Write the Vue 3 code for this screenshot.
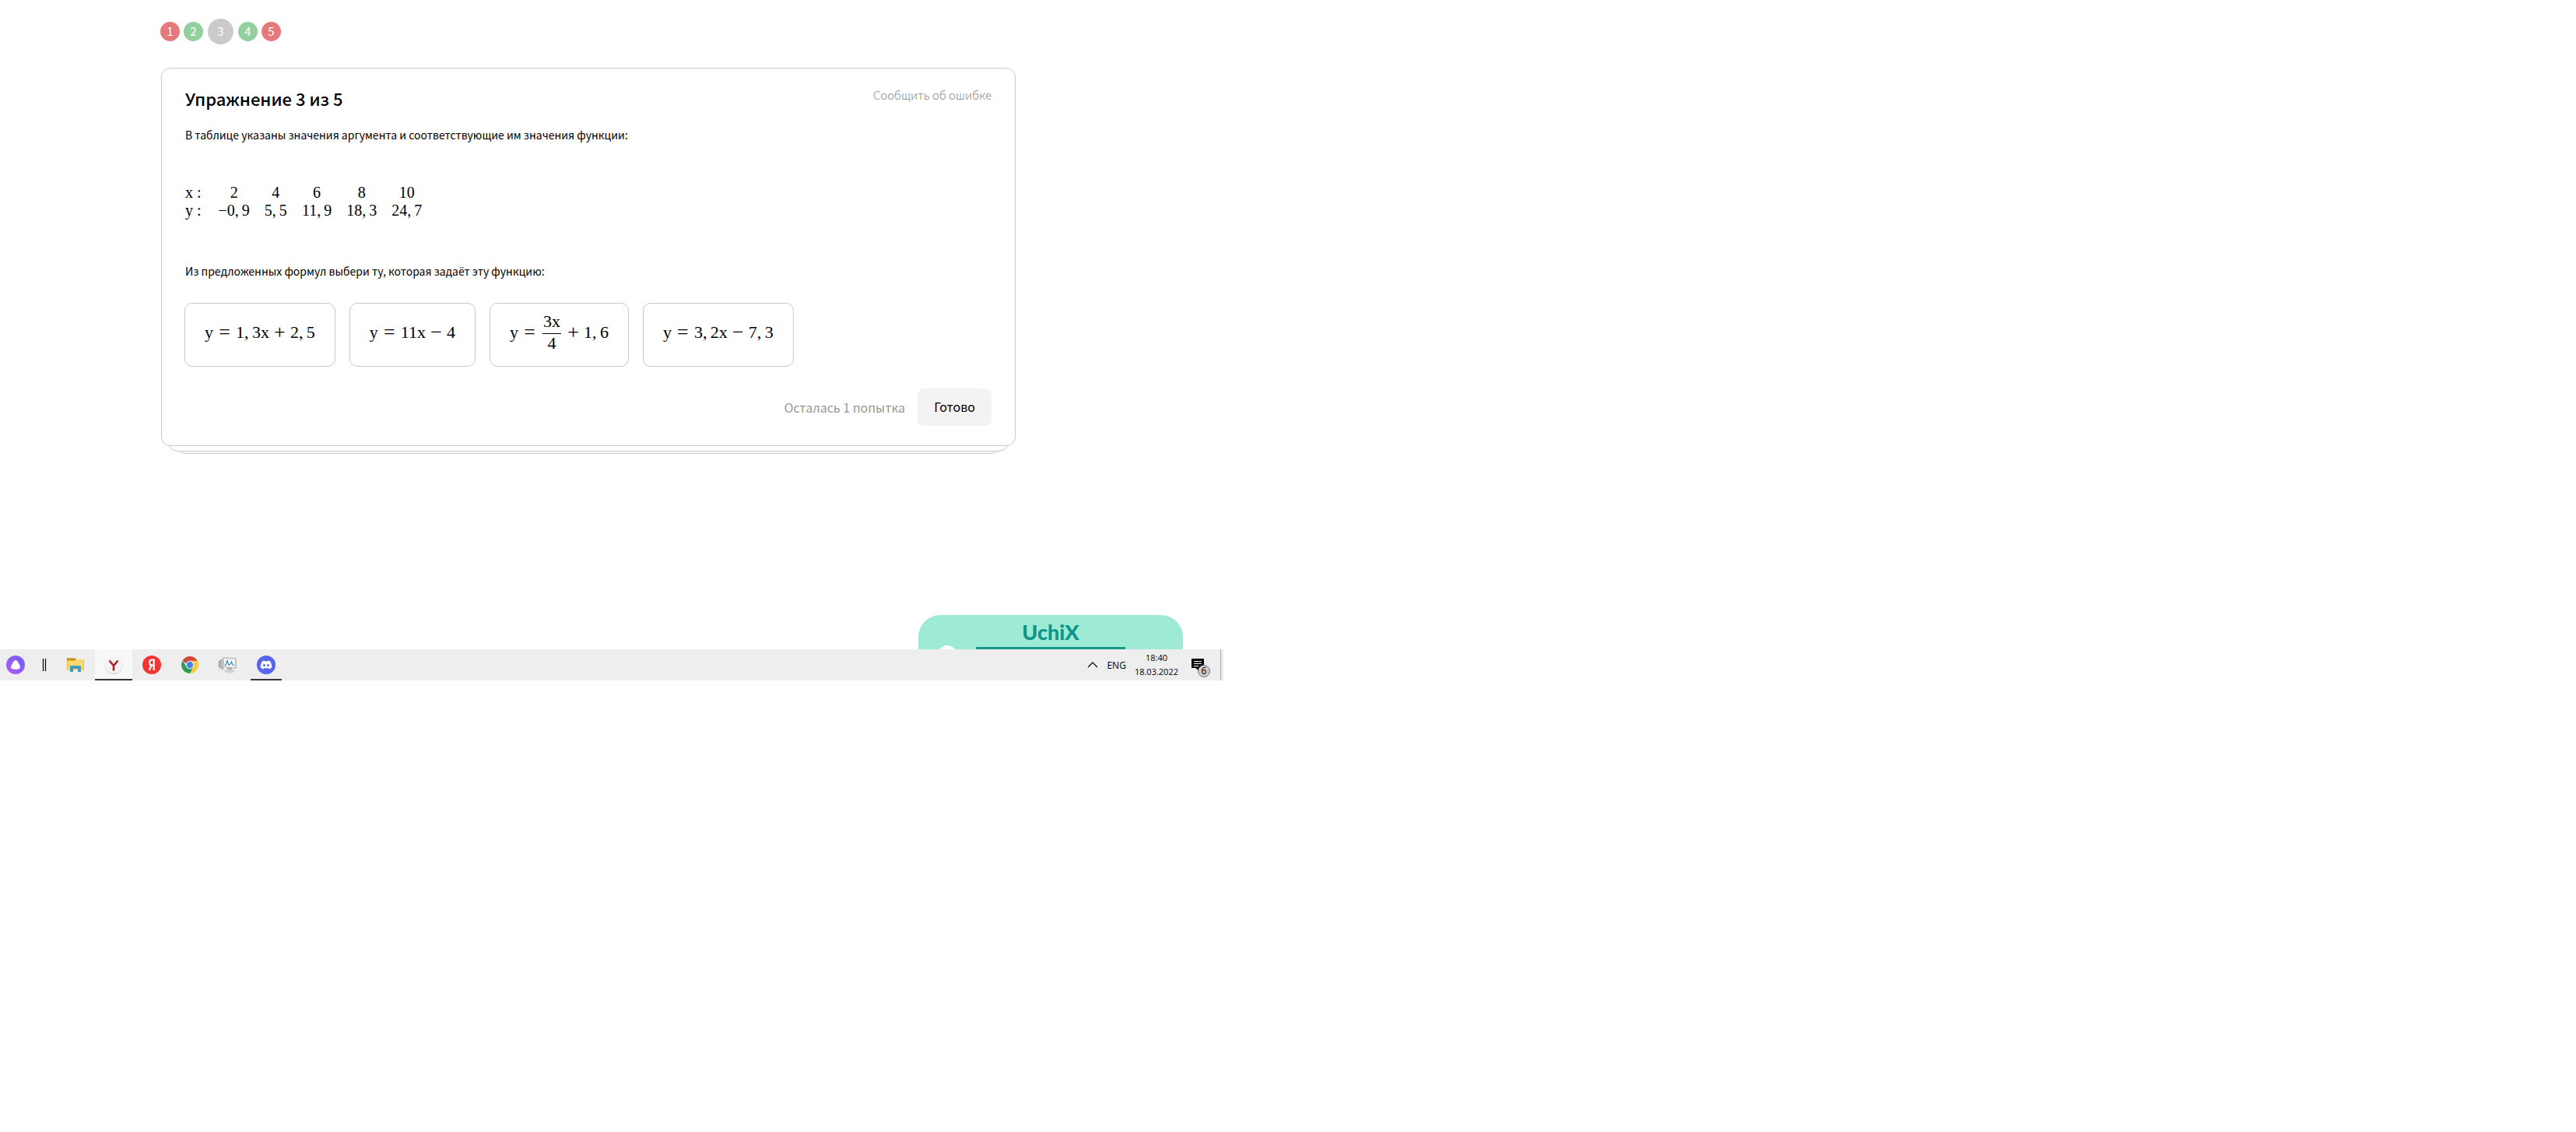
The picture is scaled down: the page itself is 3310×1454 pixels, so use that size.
<script setup>
const steps = [
  { n: 1, state: 'wrong' },
  { n: 2, state: 'right' },
  { n: 3, state: 'current' },
  { n: 4, state: 'right' },
  { n: 5, state: 'wrong' },
]

// Decimal commas are followed by a thin space (U+2009).
const rows = [
  { name: 'x', values: ['2', '4', '6', '8', '10'] },
  { name: 'y', values: ['−0,\u20099', '5,\u20095', '11,\u20099', '18,\u20093', '24,\u20097'] },
]

const formulas = [
  [{ text: 'y' }, { rel: '=' }, { text: '1,\u20093x' }, { op: '+' }, { text: '2,\u20095' }],
  [{ text: 'y' }, { rel: '=' }, { text: '11x' }, { op: '−' }, { text: '4' }],
  [{ text: 'y' }, { rel: '=' }, { top: '3x', bottom: '4' }, { op: '+' }, { text: '1,\u20096' }],
  [{ text: 'y' }, { rel: '=' }, { text: '3,\u20092x' }, { op: '−' }, { text: '7,\u20093' }],
]
</script>

<template>
  <div class="desktop">
    <main class="page">
      <nav class="steps" aria-label="Упражнения">
        <a v-for="s in steps" :key="s.n" href="#" class="step" :class="s.state">{{ s.n }}</a>
      </nav>

      <div class="stack">
        <section class="card">
          <header class="card-head">
            <h1>Упражнение 3 из 5</h1>
            <a href="#" class="report">Сообщить об ошибке</a>
          </header>
          <p class="lead">В таблице указаны значения аргумента и соответствующие им значения функции:</p>
          <table class="values">
            <tbody>
              <tr v-for="r in rows" :key="r.name">
                <th scope="row">{{ r.name }} :</th>
                <td v-for="v in r.values" :key="v">{{ v }}</td>
              </tr>
            </tbody>
          </table>
          <p class="lead">Из предложенных формул выбери ту, которая задаёт эту функцию:</p>
          <div class="options">
            <button v-for="(f, i) in formulas" :key="i" type="button" class="option">
              <template v-for="(t, j) in f" :key="j">
                <span v-if="t.text">{{ t.text }}</span>
                <span v-else-if="t.rel" class="rel">{{ t.rel }}</span>
                <span v-else-if="t.op" class="op">{{ t.op }}</span>
                <span v-else class="frac"><span class="num">{{ t.top }}</span><span>{{ t.bottom }}</span></span>
              </template>
            </button>
          </div>
          <footer class="card-foot">
            <span class="attempts">Осталась 1 попытка</span>
            <button type="button" class="done">Готово</button>
          </footer>
        </section>
        <div class="sheet sheet-mid"></div>
        <div class="sheet sheet-back"></div>
      </div>
    </main>

    <aside class="promo">
      <span class="promo-dot"></span>
      <span class="promo-title">UchiX</span>
      <span class="promo-bar"></span>
    </aside>

    <div class="taskbar">
      <button type="button" class="app first" aria-label="Алиса">
        <svg width="24" height="24" viewBox="0 0 24 24">
          <defs>
            <linearGradient id="alice" x1="0" y1="1" x2="1" y2="0">
              <stop offset="0" stop-color="#b35cf5" /><stop offset="1" stop-color="#6a5df5" />
            </linearGradient>
          </defs>
          <circle cx="12" cy="12" r="12" fill="url(#alice)" />
          <path d="M12 6c1.400 0 2.200 1 3.100 2.500l2.300 4.200c1.400 2.800.4 5-5.400 5s-6.800-2.200-5.400-5l2.300-4.200C9.800 7 10.600 6 12 6z" fill="#fff" />
        </svg>
      </button>
      <span class="divider"><svg width="6" height="16" viewBox="0 0 6 16"><path d="M1.500 0v16M4.500 0v16" stroke="#000" stroke-width="1.200" /></svg></span>
      <button type="button" class="app" aria-label="Проводник">
        <svg width="22" height="20" viewBox="0 0 22 20">
          <path d="M0 2a1 1 0 0 1 1-1h9l2 2h9a1 1 0 0 1 1 1v13H0z" fill="#f0b93c" />
          <path d="M0 1.500h11v3H0z" fill="#c9952d" />
          <path d="M1 5l10-.5 1.500-1.500H21v14H1z" fill="#fbd96a" />
          <path d="M4 12a1 1 0 0 1 1-1h12a1 1 0 0 1 1 1v7h-4v-4H8v4H4z" fill="#3f9bcb" />
        </svg>
      </button>
      <button type="button" class="app active" aria-label="Яндекс Браузер">
        <svg width="24" height="24" viewBox="0 0 24 24">
          <circle cx="12" cy="12.500" r="11.500" fill="#dcdcdc" />
          <circle cx="12" cy="11.500" r="11" fill="#f5f5f4" />
          <path d="M6.500 6.500L12 13l5.500-6.500M12 12v7.500" fill="none" stroke="#b3202b" stroke-width="2.600" />
        </svg>
      </button>
      <button type="button" class="app" aria-label="Яндекс">
        <svg width="24" height="24" viewBox="0 0 24 24">
          <circle cx="12" cy="12" r="12" fill="#f73434" />
          <path d="M14.700 19V5.500h-2c-2.300 0-3.700 1.300-3.700 3.600 0 2.200 1.200 3.400 3.600 3.400h2M11.800 12.500L8.500 19" fill="none" stroke="#fff" stroke-width="2.200" />
        </svg>
      </button>
      <button type="button" class="app" aria-label="Google Chrome">
        <svg width="22" height="22" viewBox="0 0 22 22">
          <path d="M11 11V0a11 11 0 0 1 0 22z" fill="#fdcc3f" />
          <path d="M20.500 5.500A11 11 0 0 0 1.500 5.500L6.700 10 11 5.800h9.700z" fill="#d2493c" />
          <path d="M1.500 5.500A11 11 0 0 0 11 22L15.500 13.500 11 15.500 6.700 13.500z" fill="#2f9b57" />
          <circle cx="11" cy="11" r="5.200" fill="#f4f4f4" />
          <circle cx="11" cy="11" r="4.200" fill="#4384ea" />
        </svg>
      </button>
      <button type="button" class="app" aria-label="Диспетчер задач">
        <svg width="26" height="24" viewBox="0 0 26 24">
          <path d="M1 7l6-3v14l-6-3z" fill="#8d8f90" />
          <path d="M3 7v9M5 6v11" stroke="#dfdfdf" stroke-width="1" />
          <path d="M6 2l18 1v14L6 15z" fill="#c6c6c6" />
          <path d="M8 4l14 .8V15L8 13.500z" fill="#f6fafc" />
          <path d="M8.500 12.500l2-1 1.500-5 2 5.500 2-1 1.500-3 1.500 4 2.500.5" fill="none" stroke="#3b87b4" stroke-width="1.200" />
          <path d="M12 16h6v3h-6z" fill="#a9a9a9" />
          <ellipse cx="15" cy="20" rx="7" ry="2.500" fill="#d0d2d3" />
          <path d="M2 15l5 2 1 2-6-2z" fill="#c4c6c7" />
        </svg>
      </button>
      <button type="button" class="app running" aria-label="Discord">
        <svg width="24" height="24" viewBox="0 0 24 24">
          <circle cx="12" cy="12" r="12" fill="#5662f0" />
          <path d="M9.700 6.500C8.300 6.700 7.200 7.200 6.800 7.500 5.200 10 4.500 12.800 4.700 15.600c1.300 1 2.600 1.600 3.800 1.900l.9-1.500c1.700.4 3.500.4 5.200 0l.9 1.500c1.200-.3 2.500-.9 3.800-1.900.2-2.800-.5-5.600-2.100-8.100-.4-.3-1.500-.8-2.900-1l-.6 1c-1.100-.2-2.300-.2-3.400 0z" fill="#fff" />
          <circle cx="9.500" cy="12.500" r="1.500" fill="#5662f0" /><circle cx="14.500" cy="12.500" r="1.500" fill="#5662f0" />
        </svg>
      </button>

      <div class="tray">
        <button type="button" class="plain" aria-label="Скрытые значки">
          <svg width="14" height="8" viewBox="0 0 14 8"><path d="M1 7l6-6 6 6" fill="none" stroke="#111" stroke-width="1.300" /></svg>
        </button>
        <span class="lang">ENG</span>
        <span class="clock"><time>18:40</time><time>18.03.2022</time></span>
        <button type="button" class="plain notes" aria-label="Уведомления">
          <svg width="16" height="16" viewBox="0 0 16 16">
            <path d="M0 0h16v12H9.500v4L5.500 12H0z" fill="#000" />
            <path d="M3 3.500h10M3 6.500h10M3 9.500h6" stroke="#fff" stroke-width="1" />
          </svg>
          <span class="badge">6</span>
        </button>
        <span class="edge"></span>
      </div>
    </div>
  </div>
</template>

<style>
body {
  margin: 0;
  background: #fff;
}
</style>

<style scoped>
.desktop {
  max-width: 1572px;
  box-sizing: border-box;
  color: #000;
  font-family: "Noto Sans CJK SC", "Noto Sans", sans-serif;
}
button {
  margin: 0;
  padding: 0;
  border: 0;
  background: none;
  color: inherit;
  font: inherit;
  cursor: pointer;
}
a {
  text-decoration: none;
}
svg {
  display: block;
}
.page {
  max-width: 1099px;
  padding: 24px 0 0 206px;
}
.steps {
  display: flex;
  align-items: center;
  gap: 5px;
}
.step {
  width: 25px;
  height: 25px;
  border-radius: 50%;
  color: #fff;
  font-size: 15px;
  line-height: 24px;
  text-align: center;
}
.wrong {
  background: #e4787a;
}
.right {
  background: #94cf9f;
}
.current {
  width: 33px;
  height: 33px;
  margin: 0 1px;
  line-height: 32px;
  background: #cacaca;
}
.stack {
  margin-top: 30px;
  padding-left: 1px;
}
.card {
  position: relative;
  z-index: 2;
  padding: 22px 30px 25px;
  border: 1px solid #c8c8c8;
  border-radius: 12px;
  background: #fff;
}
.card-head {
  display: flex;
  justify-content: space-between;
  align-items: flex-start;
}
h1 {
  margin: 0;
  font-size: 22px;
  line-height: 32px;
  font-weight: 500;
}
.report {
  color: #8c8c8c;
  font-size: 15px;
  line-height: 24px;
  font-weight: 300;
}
.lead {
  margin: 19px 0 0;
  font-size: 14px;
  line-height: 24px;
}
.values {
  margin: 51px 0 54px;
  border-collapse: collapse;
  font-family: "Liberation Serif", serif;
  font-size: 20px;
  line-height: 23px;
}
.values th,
.values td {
  padding: 0 19px 0 0;
  font-weight: 400;
  text-align: center;
  white-space: nowrap;
}
.values th {
  padding-right: 22px;
}
.options {
  display: flex;
  flex-wrap: wrap;
  gap: 18px;
  margin: 29px 0 0 -1px;
}
.option {
  display: flex;
  align-items: center;
  height: 82px;
  padding: 0 25px 6px;
  border: 1px solid #c8c8c8;
  border-radius: 10px;
  font-family: "Liberation Serif", serif;
  font-size: 22px;
  line-height: 24px;
  white-space: nowrap;
}
.rel,
.op {
  width: 15px;
  font-size: 26px;
  text-align: center;
}
.rel {
  margin: 0 7px;
}
.op {
  margin: 0 6px;
}
.frac {
  display: flex;
  flex-direction: column;
  margin: 0 2px;
  text-align: center;
}
.num {
  padding: 0 1px 3px;
  border-bottom: 1px solid #000;
}
.card-foot {
  display: flex;
  justify-content: flex-end;
  align-items: center;
  gap: 16px;
  margin-top: 28px;
}
.attempts {
  color: #999;
  font-size: 16px;
  line-height: 24px;
}
.done {
  height: 48px;
  padding: 0 21px 2px;
  border-radius: 8px;
  background: #f3f3f3;
  font-size: 16px;
}
.sheet {
  position: relative;
  height: 20px;
  border: 1px solid #c8c8c8;
  border-radius: 0 0 14px 14px;
  background: #fff;
}
.sheet-mid {
  z-index: 1;
  margin: -15px 8px 0;
}
.sheet-back {
  z-index: 0;
  margin: -19px 18px 0;
}
.promo {
  display: grid;
  grid-template-columns: 74px 192px 74px;
  grid-template-rows: 44px;
  align-items: end;
  justify-items: center;
  width: 340px;
  margin: 207px 52px 0 auto;
  border-radius: 28px 28px 0 0;
  background: #9eead5;
  overflow: hidden;
}
.promo-dot {
  grid-area: 1 / 1;
  width: 24px;
  height: 24px;
  margin-bottom: -19px;
  border-radius: 50%;
  background: #fff;
}
.promo-title {
  grid-area: 1 / 2;
  align-self: start;
  color: #0c9588;
  font-family: Lato, sans-serif;
  font-size: 27px;
  line-height: 43px;
  font-weight: 900;
}
.promo-bar {
  grid-area: 1 / 2;
  width: 100%;
  height: 3px;
  background: #159688;
}
.taskbar {
  display: flex;
  gap: 1px;
  height: 40px;
  background: #eee;
}
.app {
  display: flex;
  align-items: center;
  justify-content: center;
  position: relative;
  width: 48px;
}
.first {
  width: 40px;
}
.divider {
  display: flex;
  align-items: center;
  justify-content: center;
  width: 31px;
}
.active {
  background: #f8f8f8;
}
.active::after,
.running::after {
  content: "";
  position: absolute;
  right: 0;
  bottom: 0;
  left: 0;
  height: 2px;
  background: #38343a;
}
.running::after {
  right: 4px;
  left: 4px;
}
.tray {
  display: flex;
  align-items: center;
  gap: 11px;
  margin-left: auto;
  font-family: "Open Sans", sans-serif;
  font-size: 11px;
}
.lang {
  font-size: 12px;
}
.clock {
  display: flex;
  flex-direction: column;
  line-height: 18px;
  text-align: center;
}
.notes {
  position: relative;
  margin-left: 6px;
}
.badge {
  position: absolute;
  top: 8px;
  left: 8px;
  width: 14px;
  height: 14px;
  border: 1px solid #777;
  border-radius: 50%;
  background: #ccc;
  font-size: 12px;
  line-height: 14px;
  text-align: center;
}
.edge {
  width: 4px;
  height: 40px;
  margin-left: 10px;
  box-sizing: border-box;
  border-left: 1px solid #aaa;
}
</style>
